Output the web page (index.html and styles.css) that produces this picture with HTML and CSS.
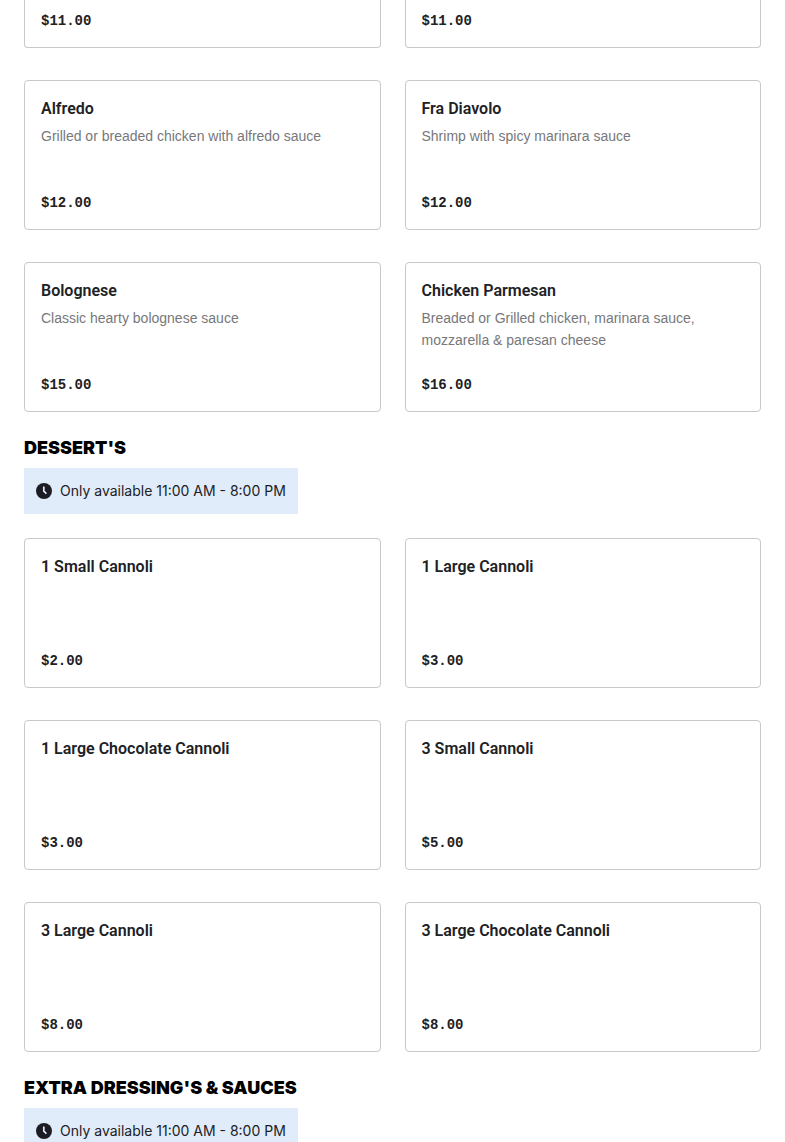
FILE: index.html
```
<!DOCTYPE html>
<html lang="en">
<head>
  <meta charset="UTF-8">
  <meta name="viewport" content="width=device-width, initial-scale=1">
  <title>Menu</title>
  <link rel="stylesheet" href="styles.css">
</head>
<body>
  <main class="menu">
    <section class="menu-section">
      <div class="items">
        <article class="item item-cut"><p class="price">$11.00</p></article>
        <article class="item item-cut"><p class="price">$11.00</p></article>
        <article class="item">
          <h3>Alfredo</h3>
          <p class="description">Grilled or breaded chicken with alfredo sauce</p>
          <p class="price">$12.00</p>
        </article>
        <article class="item">
          <h3>Fra Diavolo</h3>
          <p class="description">Shrimp with spicy marinara sauce</p>
          <p class="price">$12.00</p>
        </article>
        <article class="item">
          <h3>Bolognese</h3>
          <p class="description">Classic hearty bolognese sauce</p>
          <p class="price">$15.00</p>
        </article>
        <article class="item">
          <h3>Chicken Parmesan</h3>
          <p class="description">Breaded or Grilled chicken, marinara sauce, mozzarella &amp; paresan cheese</p>
          <p class="price">$16.00</p>
        </article>
      </div>
    </section>

    <section class="menu-section">
      <h2>DESSERT'S</h2>
      <p class="availability">
        <svg class="clock" viewBox="0 0 16 16" aria-hidden="true">
          <circle cx="8" cy="8" r="8" fill="#1c1c24"/>
          <path d="M7.8 3.6v4.6l2.6 2.4" fill="none" stroke="#e1ecfa" stroke-width="1.7"/>
        </svg>
        Only available 11:00 AM - 8:00 PM
      </p>
      <div class="items">
        <article class="item">
          <h3>1 Small Cannoli</h3>
          <p class="price">$2.00</p>
        </article>
        <article class="item">
          <h3>1 Large Cannoli</h3>
          <p class="price">$3.00</p>
        </article>
        <article class="item">
          <h3>1 Large Chocolate Cannoli</h3>
          <p class="price">$3.00</p>
        </article>
        <article class="item">
          <h3>3 Small Cannoli</h3>
          <p class="price">$5.00</p>
        </article>
        <article class="item">
          <h3>3 Large Cannoli</h3>
          <p class="price">$8.00</p>
        </article>
        <article class="item">
          <h3>3 Large Chocolate Cannoli</h3>
          <p class="price">$8.00</p>
        </article>
      </div>
    </section>

    <section class="menu-section">
      <h2>EXTRA DRESSING'S &amp; SAUCES</h2>
      <p class="availability">
        <svg class="clock" viewBox="0 0 16 16" aria-hidden="true">
          <circle cx="8" cy="8" r="8" fill="#1c1c24"/>
          <path d="M7.8 3.6v4.6l2.6 2.4" fill="none" stroke="#e1ecfa" stroke-width="1.7"/>
        </svg>
        Only available 11:00 AM - 8:00 PM
      </p>
    </section>
  </main>
</body>
</html>
```
FILE: styles.css
```
* {
  box-sizing: border-box;
}

body {
  margin: 0;
  background: #fff;
  color: #202125;
  font-family: Inter, "Liberation Sans", sans-serif;
  font-size: 14px;
  line-height: 22px;
}

h2, h3, p {
  margin: 0;
}

.menu {
  display: flex;
  flex-direction: column;
  gap: 24px;
  height: 100vh;
  padding: 0 24px;
  overflow: hidden;
}

.menu-section {
  flex-shrink: 0;
}

h2 {
  color: #000;
  font-size: 18px;
  font-weight: 900;
  line-height: 24px;
}

.availability {
  display: flex;
  align-items: center;
  gap: 8px;
  width: fit-content;
  margin: 8px 0 24px;
  padding: 12px;
  background: #e1ecfa;
}

.clock {
  width: 16px;
  height: 16px;
}

.items {
  display: grid;
  grid-template-columns: 1fr 1fr;
  gap: 32px 24px;
}

.item {
  display: flex;
  flex-direction: column;
  min-height: 150px;
  padding: 16px;
  border: 1px solid #c8c9cb;
  border-radius: 4px;
}

.item-cut {
  min-height: 48px;
  padding-top: 8px;
  border-top: 0;
  border-radius: 0 0 4px 4px;
}

h3 {
  margin-bottom: 4px;
  font-family: Roboto, sans-serif;
  font-size: 16px;
  font-weight: 600;
  line-height: 24px;
}

.description {
  color: #77787b;
  font-family: "Liberation Sans", Arial, sans-serif;
}

.price {
  margin-top: auto;
  font-family: "Liberation Mono", monospace;
  font-weight: 700;
  line-height: 20px;
}
```
